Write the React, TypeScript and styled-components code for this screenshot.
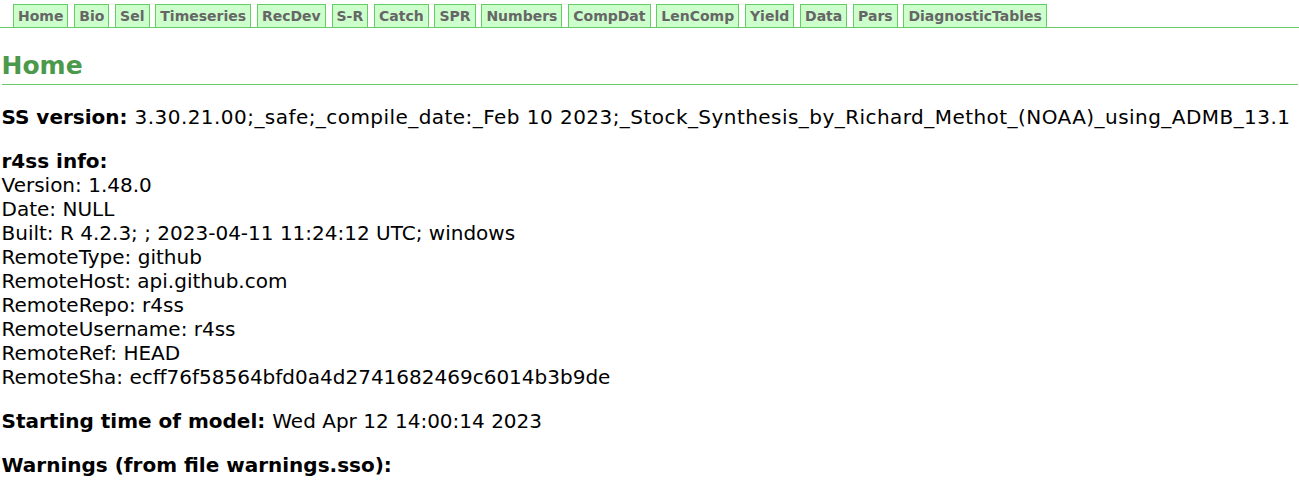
import React from 'react'
import styled, { createGlobalStyle } from 'styled-components'

const GlobalStyle = createGlobalStyle`
  body {
    margin: 0;
    padding: 0 1.5px;
    background: #ffffff;
    color: #000000;
    font-family: "DejaVu Sans", Verdana, sans-serif;
    font-size: 20px;
    line-height: 24px;
  }
`

const tabs = [
  'Home',
  'Bio',
  'Sel',
  'Timeseries',
  'RecDev',
  'S-R',
  'Catch',
  'SPR',
  'Numbers',
  'CompDat',
  'LenComp',
  'Yield',
  'Data',
  'Pars',
  'DiagnosticTables',
]

const info: [string, string][] = [
  ['Version', '1.48.0'],
  ['Date', 'NULL'],
  ['Built', 'R 4.2.3; ; 2023-04-11 11:24:12 UTC; windows'],
  ['RemoteType', 'github'],
  ['RemoteHost', 'api.github.com'],
  ['RemoteRepo', 'r4ss'],
  ['RemoteUsername', 'r4ss'],
  ['RemoteRef', 'HEAD'],
  ['RemoteSha', 'ecff76f58564bfd0a4d2741682469c6014b3b9de'],
]

export default function App() {
  return (
    <>
      <GlobalStyle />
      <TabNav>
        {tabs.map(t => (
          <Tab key={t}>
            <TabLink href="#">{t}</TabLink>
          </Tab>
        ))}
      </TabNav>
      <Title>Home</Title>
      <Para>
        <b>SS version: </b>
        <Wide>
          3.30.21.00;_safe;_compile_date:_Feb 10 2023;_Stock_Synthesis_by_Richard_Methot_(NOAA)_using_ADMB_13.1
        </Wide>
      </Para>
      <Para>
        <b>r4ss info:</b>
        {info.map(([k, v]) => (
          <Line key={k}>
            {k}: {v}
          </Line>
        ))}
      </Para>
      <Para>
        <b>Starting time of model: </b>
        Wed Apr 12 14:00:14 2023
      </Para>
      <Para>
        <b>Warnings (from file warnings.sso):</b>
      </Para>
    </>
  )
}

const TabNav = styled.ul`
  display: flex;
  align-items: flex-end;
  gap: 5.8px;
  height: 27px;
  margin: 0 -1.5px;
  padding: 0 0 0 13px;
  list-style: none;
  border-bottom: 1px solid #66cc66;
`

const Tab = styled.li`
  display: block;
  margin: 0;
  padding: 0;
`

const TabLink = styled.a`
  display: block;
  height: 22px;
  padding: 0 4px;
  border: 1px solid #66cc66;
  border-bottom: none;
  background: #ccffcc;
  color: #666666;
  font-size: 14px;
  font-weight: bold;
  line-height: 22px;
  text-decoration: none;
`

const Title = styled.h2`
  margin: 22px 0 0;
  padding-bottom: 2px;
  border-bottom: 1px solid #66cc66;
  color: #4c994c;
  font-size: 25px;
  line-height: 32px;
  font-weight: bold;
`

const Para = styled.p`
  margin: 20px 0;
`

const Wide = styled.span`
  letter-spacing: 0.45px;
`

const Line = styled.div``
